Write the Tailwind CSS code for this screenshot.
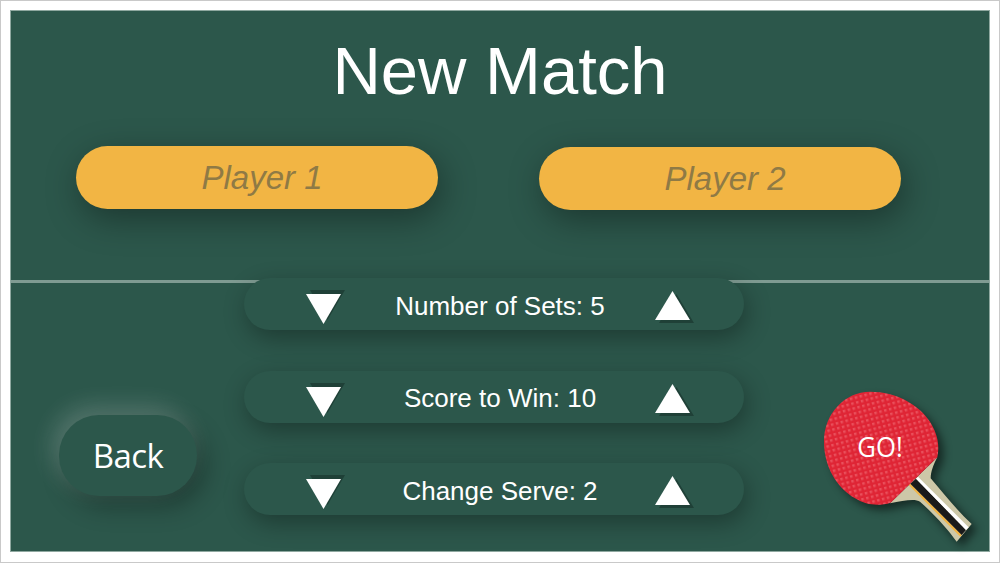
<!DOCTYPE html>
<html lang="en">
<head>
    <meta charset="UTF-8">
    <title>New Match</title>
    <script src="https://cdn.jsdelivr.net/npm/@tailwindcss/browser@4"></script>
</head>
<body class="w-[1000px] h-[563px] overflow-hidden bg-white font-['Liberation_Sans',sans-serif]">
    <div class="h-[563px] border border-[#c9c9c9] p-[9px]">
        <!-- Table -->
        <div class="relative h-[542px] bg-[#2c574b] border border-[#8fa8a0]">
            <!-- Net line -->
            <div class="absolute left-0 right-0 top-[269px] h-[3px] bg-[#7f9b92]"></div>

            <h1 class="h-[119px] flex items-center justify-center text-[67px] leading-none text-white">New Match</h1>

            <!-- Player names -->
            <div class="flex pl-[65px] gap-[101px] mt-[16px]">
                <div class="w-[362px] h-[63px] pl-[10px] rounded-full bg-[#f2b544] flex items-center justify-center italic text-[33px] text-[#8f7a45] shadow-[4px_10px_34px_rgba(0,0,0,0.36)]">Player 1</div>
                <div class="w-[362px] h-[63px] pl-[10px] mt-px rounded-full bg-[#f2b544] flex items-center justify-center italic text-[33px] text-[#8f7a45] shadow-[4px_10px_34px_rgba(0,0,0,0.36)]">Player 2</div>
            </div>

            <div class="relative flex mt-[68px]">
                <!-- Back -->
                <div class="w-[233px] pl-[48px] pt-[137px]">
                    <button class="w-[138px] h-[81px] rounded-[40px] bg-[#2c574b] text-white text-[33px] tracking-[-0.6px] font-['Open_Sans',sans-serif] shadow-[-6px_-8px_24px_rgba(255,255,255,0.2),8px_10px_26px_rgba(0,0,0,0.32)]">Back</button>
                </div>

                <!-- Settings -->
                <div class="flex flex-col gap-[40.5px] w-[500px] shrink-0">
                    <div class="grid grid-cols-[126px_260px_114px] items-center w-[500px] h-[52px] rounded-[26px] bg-[#2c574b] text-white text-[26px] shadow-[3px_8px_24px_rgba(0,0,0,0.32)]">
                        <svg class="ml-[62px] translate-y-[4px]" width="40" height="36" viewBox="0 0 40 36"><polygon points="4,0 39,0 21.500,30" fill="#1f4037"/><polygon points="0,4 35,4 17.500,34" fill="#fff"/></svg>
                        <span class="text-center pt-[4px]">Number of Sets: 5</span>
                        <svg class="ml-[25px] translate-y-[1px]" width="40" height="36" viewBox="0 0 40 36"><polygon points="4,36 39,36 21.500,7" fill="#1f4037"/><polygon points="0,33 35,33 17.500,4" fill="#fff"/></svg>
                    </div>
                    <div class="grid grid-cols-[126px_260px_114px] items-center w-[500px] h-[52px] rounded-[26px] bg-[#2c574b] text-white text-[26px] shadow-[3px_8px_24px_rgba(0,0,0,0.32)]">
                        <svg class="ml-[62px] translate-y-[4px]" width="40" height="36" viewBox="0 0 40 36"><polygon points="4,0 39,0 21.500,30" fill="#1f4037"/><polygon points="0,4 35,4 17.500,34" fill="#fff"/></svg>
                        <span class="text-center pt-[4px]">Score to Win: 10</span>
                        <svg class="ml-[25px] translate-y-[1px]" width="40" height="36" viewBox="0 0 40 36"><polygon points="4,36 39,36 21.500,7" fill="#1f4037"/><polygon points="0,33 35,33 17.500,4" fill="#fff"/></svg>
                    </div>
                    <div class="grid grid-cols-[126px_260px_114px] items-center w-[500px] h-[52px] rounded-[26px] bg-[#2c574b] text-white text-[26px] shadow-[3px_8px_24px_rgba(0,0,0,0.32)]">
                        <svg class="ml-[62px] translate-y-[4px]" width="40" height="36" viewBox="0 0 40 36"><polygon points="4,0 39,0 21.500,30" fill="#1f4037"/><polygon points="0,4 35,4 17.500,34" fill="#fff"/></svg>
                        <span class="text-center pt-[4px]">Change Serve: 2</span>
                        <svg class="ml-[25px] translate-y-[1px]" width="40" height="36" viewBox="0 0 40 36"><polygon points="4,36 39,36 21.500,7" fill="#1f4037"/><polygon points="0,33 35,33 17.500,4" fill="#fff"/></svg>
                    </div>
                </div>

                <!-- Paddle: 3 viewBox units to a pixel -->
                <div class="pl-[36px] pt-[92px] shrink-0">
                    <svg width="200" height="173" viewBox="0 0 600 519" class="overflow-visible">
                        <defs>
                            <pattern id="rubber" width="15" height="15" patternUnits="userSpaceOnUse" patternTransform="rotate(-15)">
                                <rect width="15" height="15" fill="#df2535"/>
                                <rect width="7.500" height="7.500" fill="#e9505c"/>
                            </pattern>
                            <filter id="soft" x="-30%" y="-30%" width="170%" height="170%">
                                <feGaussianBlur stdDeviation="12"/>
                            </filter>
                        </defs>
                        <path transform="translate(16,16)" opacity="0.5" filter="url(#soft)" d="M332 398C300 408 262 408 225 385C170 352 132 290 132 215C132 130 195 65 270 65C350 65 418 105 450 155C472 190 480 225 472 262C458 290 450 310 452 325L575 462L530 515L420 395L395 385Z" fill="#000"/>
                        <!-- Handle -->
                        <path d="M330 400L472 262C460 285 452 305 452 325C490 370 530 420 575 462L530 515C505 480 460 430 420 395C405 385 370 392 330 400Z" fill="#cdc8a8"/>
                        <polygon points="386,345 391,341 545,495 541,500" fill="#f2b544"/>
                        <polygon points="391,341 408,326 558,480 545,495" fill="#1a1a1a"/>
                        <polygon points="408,326 414,320 566,472 558,480" fill="#fff"/>
                        <!-- Rubber -->
                        <path d="M332 398C300 408 262 408 225 385C170 352 132 290 132 215C132 130 195 65 270 65C350 65 418 105 450 155C472 190 480 225 472 262Z" fill="url(#rubber)"/>
                        <text x="300" y="262" text-anchor="middle" fill="#fff" font-size="84" textLength="136" lengthAdjust="spacingAndGlyphs" font-family="Open Sans, sans-serif">GO!</text>
                    </svg>
                </div>
            </div>
        </div>
    </div>
</body>
</html>
